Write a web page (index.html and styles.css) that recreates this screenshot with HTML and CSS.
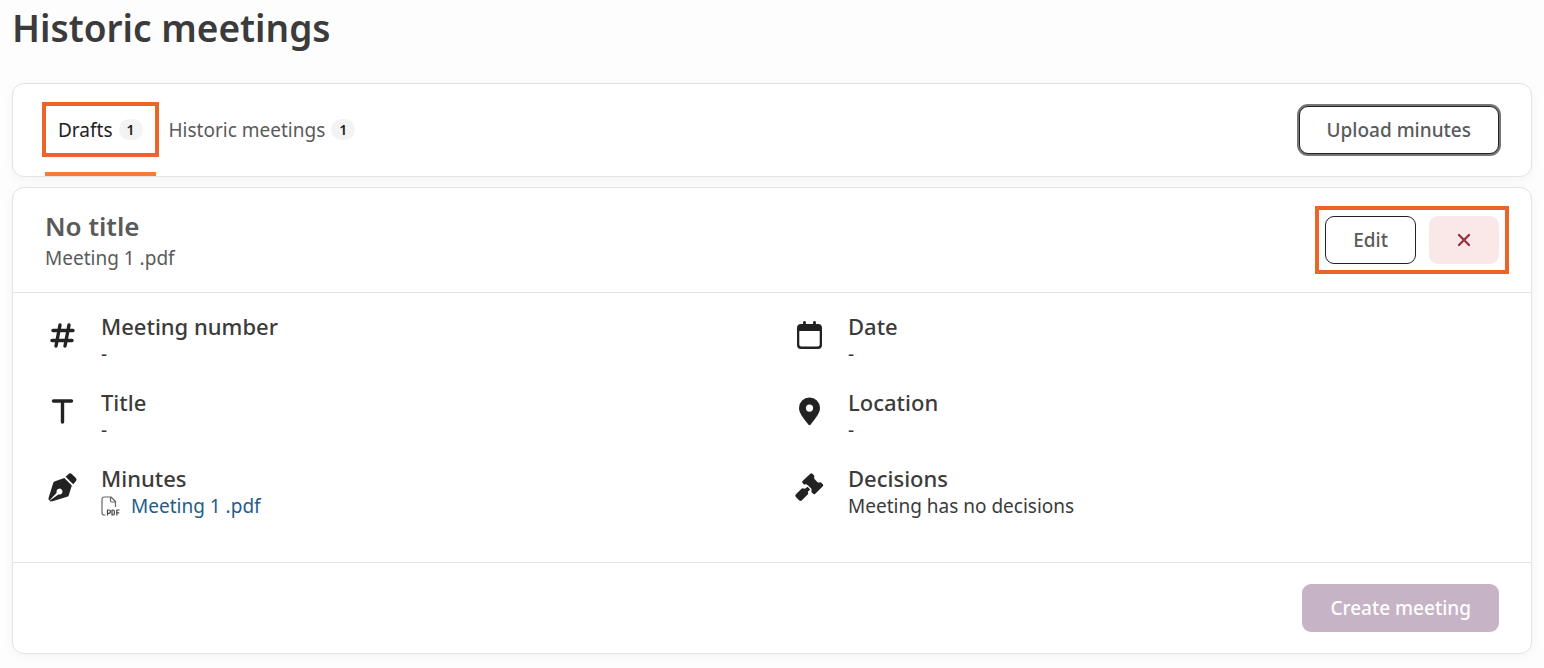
FILE: index.html
```html
<!DOCTYPE html>
<html lang="en">
  <head>
    <meta charset="UTF-8" />
    <meta name="viewport" content="width=device-width, initial-scale=1.0" />
    <title>Historic meetings</title>
    <link rel="stylesheet" href="styles.css">
  </head>
  <body>
    <h1>Historic meetings</h1>

    <div class="card toolbar">
      <nav class="tabs">
        <a href="#drafts" class="tab active"><span class="tab-label highlight">Drafts <span class="count">1</span></span></a>
        <a href="#historic" class="tab"><span class="tab-label">Historic meetings <span class="count">1</span></span></a>
      </nav>
      <button type="button" class="button outlined focused">Upload minutes</button>
    </div>

    <main class="card">
      <header class="card-header">
        <div>
          <h2>No title</h2>
          <p class="file-name">Meeting 1 .pdf</p>
        </div>
        <div class="actions highlight">
          <button type="button" class="button outlined">Edit</button>
          <button type="button" class="button danger" aria-label="Delete">
            <svg width="14" height="14" viewBox="0 0 14 14" fill="none" stroke="currentColor" stroke-width="2.4" stroke-linecap="round"><path d="M2 2l10 10M12 2L2 12" /></svg>
          </button>
        </div>
      </header>

      <div class="details">
        <div class="detail">
          <svg class="icon" viewBox="0 0 32 32" fill="none" stroke="currentColor" stroke-width="3.4" stroke-linecap="round"><path d="M14 6l-4 21M23 6l-4 21M7 11.500h20M6 21.500h20" /></svg>
          <div>
            <h3>Meeting number</h3>
            <p>-</p>
          </div>
        </div>
        <div class="detail">
          <svg class="icon" viewBox="0 0 32 32" fill="currentColor"><path fill-rule="evenodd" d="M11.500 2a1.400 1.400 0 0 1 1.400 1.400V5h7.200V3.400a1.400 1.400 0 0 1 2.800 0V5h2.100a4 4 0 0 1 4 4v17a4 4 0 0 1-4 4H8a4 4 0 0 1-4-4V9a4 4 0 0 1 4-4h2.100V3.400A1.400 1.400 0 0 1 11.500 2zM6.300 12v13.500a2 2 0 0 0 2 2h16.400a2 2 0 0 0 2-2V12z" /></svg>
          <div>
            <h3>Date</h3>
            <p>-</p>
          </div>
        </div>
        <div class="detail">
          <svg class="icon" viewBox="0 0 32 32" fill="none" stroke="currentColor" stroke-width="3.400" stroke-linecap="round"><path d="M7.500 6h18M16.500 6.500v20.500" /></svg>
          <div>
            <h3>Title</h3>
            <p>-</p>
          </div>
        </div>
        <div class="detail">
          <svg class="icon" viewBox="0 0 32 32" fill="currentColor"><path fill-rule="evenodd" d="M16.500 2.500A10.500 10.500 0 0 1 27 13c0 4.500-3.500 9-9.300 16.500a1.500 1.500 0 0 1-2.400 0C9.500 22 6 17.500 6 13A10.500 10.500 0 0 1 16.500 2.500zm0 7a3.600 3.600 0 1 0 0 7.200 3.600 3.600 0 0 0 0-7.200z" /></svg>
          <div>
            <h3>Location</h3>
            <p>-</p>
          </div>
        </div>
        <div class="detail">
          <svg class="icon" viewBox="0 0 32 32" fill="currentColor">
            <path d="M22.300 3.200a2.600 2.600 0 0 1 3.700 0l3.600 3.600a2.600 2.600 0 0 1 0 3.700l-2.400 2.800-7.600-7.600z" />
            <path d="M18.300 7l7.500 7.500-2.900 9.400c-.3.900-.9 1.600-1.800 1.900L6.500 30.300l-2.400.2-.3-.9 8.600-6.200a3 3 0 1 0-1.700-1.700l-7.300 7.700-.9-.9.2-2L7.200 12c.3-.9 1-1.600 1.900-1.800z" />
          </svg>
          <div>
            <h3>Minutes</h3>
            <p>
              <a href="#pdf" class="pdf-link">
                <svg width="20" height="20" viewBox="0 0 20 20" fill="none" stroke="#666" stroke-width="1.200" stroke-linejoin="round"><path d="M4.500 19H3.200A2.200 2.200 0 0 1 1 16.800V3.200A2.200 2.200 0 0 1 3.200 1H10l4.500 4.500V11M9.500 1v3.500A1.500 1.500 0 0 0 11 6h3.500" /><path stroke-width="1.200" stroke="#444" d="M6.500 19.500V14h1.300a1.600 1.600 0 0 1 0 3.400H6.500M11 14v5h.8a1.600 1.600 0 0 0 1.600-1.600v-1.800a1.600 1.600 0 0 0-1.600-1.600zM15.800 19.500V14h2.700M15.800 16.800h2.400" /></svg>
                Meeting 1 .pdf
              </a>
            </p>
          </div>
        </div>
        <div class="detail">
          <svg class="icon" viewBox="0 0 32 32" fill="currentColor">
            <path d="M17.300 2.800a1.500 1.500 0 0 1 2.100 0l1.500 1.500a1.500 1.500 0 0 1 .3 1.800c-.2 1 0 1.700.8 2.500l2.100 2.100c.8.800 1.500 1 2.500.8a1.500 1.500 0 0 1 1.800.3l1.400 1.400a1.500 1.500 0 0 1 0 2.100l-7.500 7.500a1.500 1.500 0 0 1-2.100 0l-1.400-1.400a1.500 1.500 0 0 1-.3-1.800c.2-1 0-1.700-.8-2.500l-2.900-2.900c-.8-.8-1.500-1-2.500-.8a1.500 1.500 0 0 1-1.800-.3l-.9-1.100a1.500 1.500 0 0 1 0-2.100z" />
            <path d="M14.600 15.800l2.600 2.600-2.300 2.300.3 2.300-6.300 6.200a2 2 0 0 1-2.800 0l-3.200-3.200a2 2 0 0 1 0-2.800l6.200-5.900 2.800.4z" />
          </svg>
          <div>
            <h3>Decisions</h3>
            <p>Meeting has no decisions</p>
          </div>
        </div>
      </div>

      <footer class="card-footer">
        <button type="button" class="button primary" disabled>Create meeting</button>
      </footer>
    </main>
  </body>
</html>
```
FILE: styles.css
```css
* {
  box-sizing: border-box;
}
body {
  font-family: "Noto Sans", sans-serif;
  font-size: 19px;
  line-height: 28px;
  margin: 0;
  padding: 4px 12px 14px;
  background-color: #fdfdfd;
  color: #3b3b3b;
}
h1, h2, h3, p {
  margin: 0;
}
h1 {
  font-size: 37px;
  line-height: 48px;
  font-weight: 600;
  margin-bottom: 31px;
}
h2 {
  font-size: 26px;
  line-height: 36px;
  font-weight: 600;
  color: #5a5a5a;
}
h3 {
  font-size: 22px;
  line-height: 28px;
  font-weight: 500;
}
.card {
  background-color: #fff;
  border: 1px solid #e3e3e3;
  border-radius: 12px;
  box-shadow: 0 2px 12px rgba(0, 0, 0, 0.04);
}
.toolbar {
  display: flex;
  justify-content: space-between;
  align-items: center;
  padding: 0 32px;
  margin-bottom: 10px;
}
.tabs {
  display: flex;
}
.tab {
  padding: 21px 0 18px;
  border-bottom: 4px solid transparent;
  color: #5a5a5a;
  text-decoration: none;
}
.tab.active {
  border-color: #f47b3c;
  color: #222;
}
.tab-label {
  display: flex;
  align-items: center;
  gap: 6px;
  height: 49px;
  padding: 0 13px;
}
.tab-label.highlight {
  outline-offset: -1px;
}
.count {
  min-width: 24px;
  border-radius: 12px;
  background-color: #f3f3f3;
  color: #222;
  font-size: 14px;
  line-height: 21px;
  font-weight: 600;
  text-align: center;
}
.highlight {
  outline: 4px solid #ee632a;
  outline-offset: 6px;
}
.button {
  height: 48px;
  padding: 0 27px;
  border: 1px solid transparent;
  border-radius: 9px;
  font-family: inherit;
  font-size: 19px;
  font-weight: 500;
}
.outlined {
  background-color: #fff;
  border-color: #222;
  color: #5a5a5a;
}
.focused {
  box-shadow: 0 0 0 2px #767676;
}
.danger {
  display: flex;
  align-items: center;
  background-color: #fae8e8;
  color: #963441;
}
.primary {
  background-color: #c6b3c6;
  color: #fff;
}
.card-header {
  display: flex;
  justify-content: space-between;
  align-items: center;
  padding: 20px 32px;
  border-bottom: 1px solid #e3e3e3;
}
.file-name {
  color: #5a5a5a;
}
.actions {
  display: flex;
  gap: 13px;
}
.details {
  display: grid;
  grid-template-columns: 1fr 1fr;
  gap: 20px 40px;
  padding: 19px 32px 42px;
}
.detail {
  display: flex;
  gap: 22px;
}
.icon {
  width: 34px;
  height: 32px;
  margin-top: 7px;
  color: #222;
}
.pdf-link {
  display: flex;
  align-items: center;
  gap: 10px;
  color: #245c8c;
  text-decoration: none;
}
.card-footer {
  display: flex;
  justify-content: flex-end;
  padding: 21px 32px;
  border-top: 1px solid #e3e3e3;
}
```
